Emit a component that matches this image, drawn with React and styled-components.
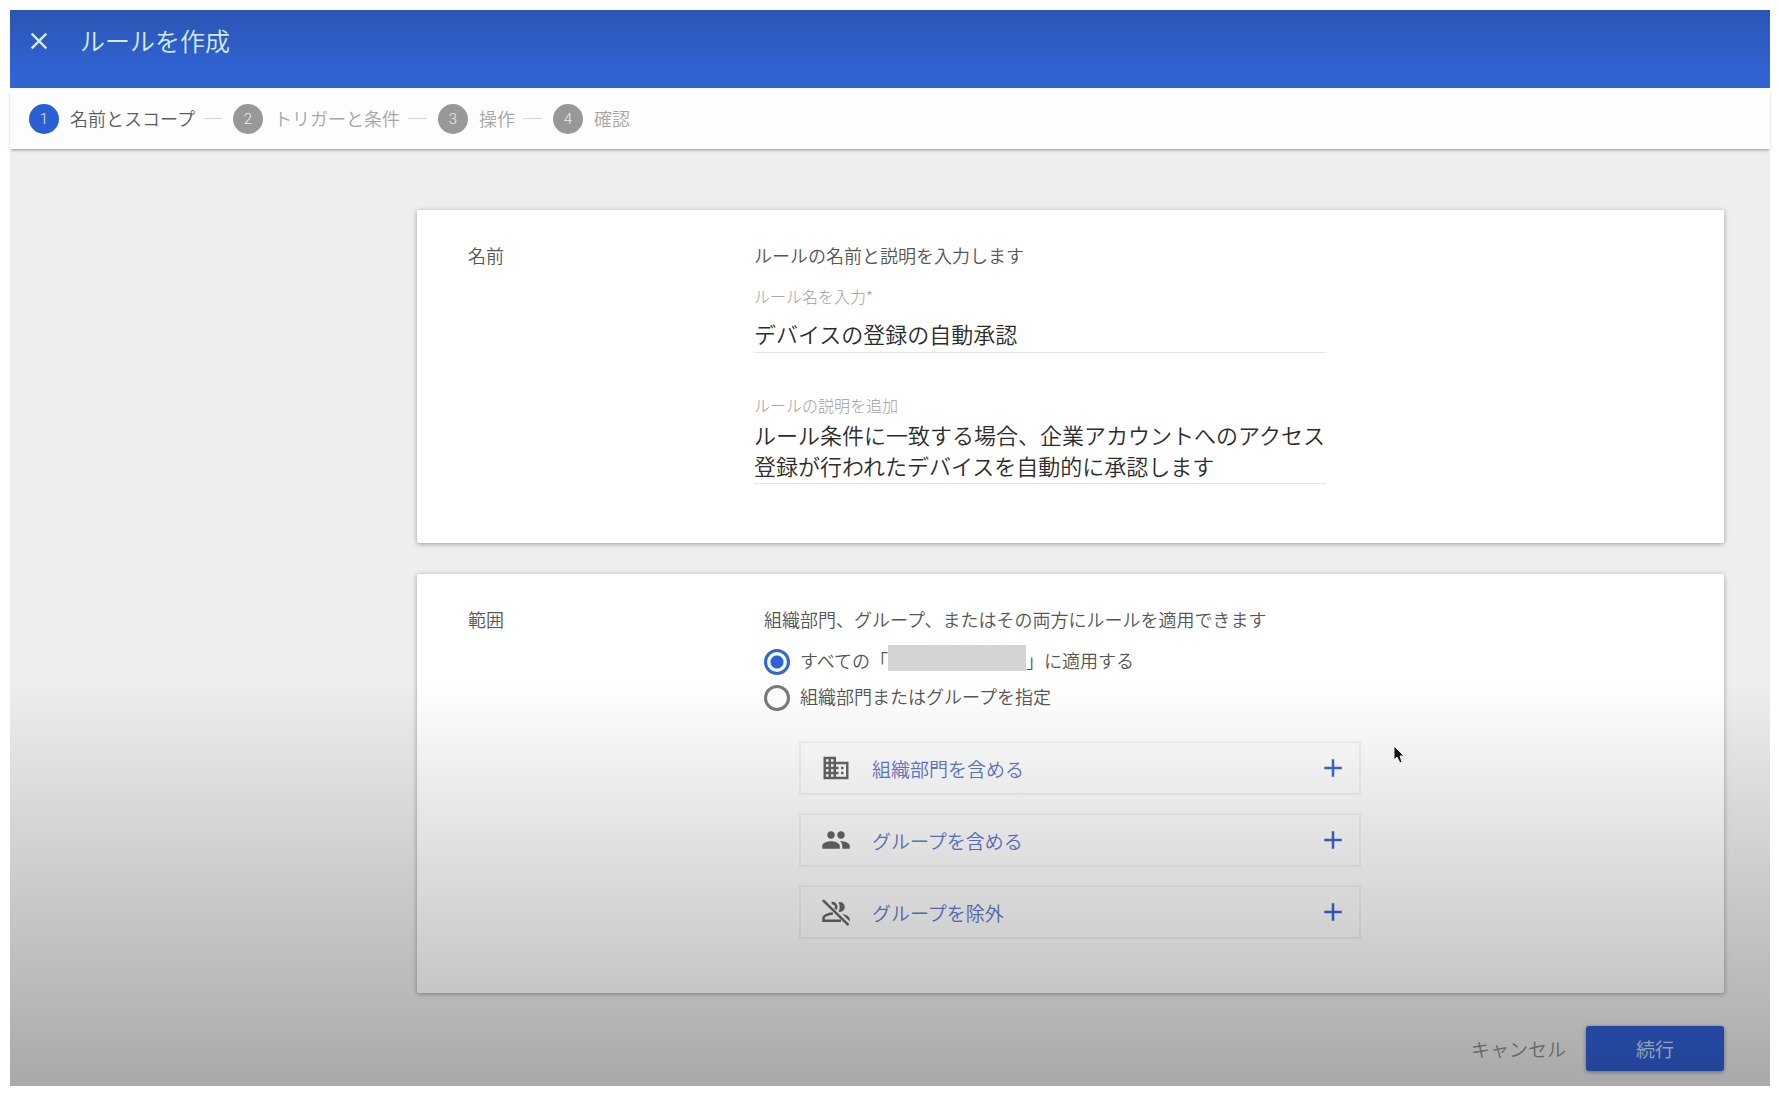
import React, { useState } from 'react';
import styled, { createGlobalStyle } from 'styled-components';
import { MdAdd, MdClose, MdDomain, MdPeople } from 'react-icons/md';

const GlobalStyle = createGlobalStyle`
  * {
    box-sizing: border-box;
  }

  body {
    margin: 0;
    background: #fff;
    color: #555;
    font-family: "Noto Sans CJK JP", sans-serif;
    font-size: 18px;
    line-height: 26px;
  }

  button, input, textarea {
    font-family: inherit;
  }
`;

const Page = styled.div`
  display: flex;
  min-height: 100vh;
  padding: 10px 10px 8px;
`;

const Frame = styled.div`
  position: relative;
  display: flex;
  flex: 1;
  flex-direction: column;
  background: #eee;
`;

// darkens the bottom of the dialog, never takes clicks
const Shade = styled.div`
  position: absolute;
  left: 0;
  right: 0;
  bottom: 0;
  height: 406px;
  background: linear-gradient(rgba(0, 0, 0, 0), rgba(0, 0, 0, 0.29));
  pointer-events: none;
`;

const Header = styled.header`
  display: flex;
  align-items: flex-start;
  gap: 27px;
  height: 78px;
  padding: 12px 15px;
  background: linear-gradient(#2b55b3, #3163d3 80%);
  color: #d3ecfb;
`;

const CloseButton = styled.button`
  display: flex;
  padding: 5px 0;
  border: 0;
  background: none;
  color: inherit;
  font-size: 28px;
  cursor: pointer;
`;

const Title = styled.h1`
  margin: 0;
  font-size: 25px;
  font-weight: 350;
  line-height: 36px;
`;

const Steps = styled.ol`
  z-index: 1;
  display: flex;
  align-items: center;
  height: 61px;
  margin: 0;
  padding: 0 19px;
  background: #fdfdfd;
  box-shadow: 0 2px 3px -1px rgba(0, 0, 0, 0.4);
  list-style: none;
`;

const Step = styled.li`
  display: flex;
  align-items: center;
  gap: 11px;
  color: ${({ $active }) => ($active ? '#5c5c5c' : '#a6a6a6')};
  font-weight: 350;

  &:not(:first-child)::before {
    content: '';
    width: 19px;
    height: 1px;
    margin-left: 8px;
    background: #d8d8d8;
  }
`;

const StepNumber = styled.span`
  display: flex;
  align-items: center;
  justify-content: center;
  width: 30px;
  height: 30px;
  border-radius: 50%;
  background: ${({ $active }) => ($active ? '#2a60d3' : '#989898')};
  color: #e9eef5;
  font-family: Roboto, sans-serif;
  font-size: 15px;
`;

const StepLabel = styled.span`
  padding-bottom: 2px;
`;

const Main = styled.main`
  display: flex;
  flex-direction: column;
  gap: 31px;
  padding: 61px 46px 0 407px;
`;

const Card = styled.section`
  display: grid;
  grid-template-columns: 286px 1fr;
  padding: 32px 52px ${({ $bottom }) => $bottom}px 51px;
  border-radius: 2px;
  background: #fff;
  box-shadow: 0 1px 5px rgba(0, 0, 0, 0.35);
`;

const CardTitle = styled.h2`
  margin: 0;
  font-size: 18px;
  font-weight: 350;
`;

const Intro = styled.p`
  margin: 0;
  font-weight: 350;
`;

const Field = styled.div`
  display: flex;
  flex-direction: column;
  width: 572px;
  max-width: 100%;
  margin-top: ${({ $top }) => $top}px;
`;

const FieldLabel = styled.label`
  color: #a0a0a0;
  font-size: 16px;
  font-weight: 300;
  line-height: 24px;
`;

const TextInput = styled.input`
  height: 45px;
  padding: 6px 0 0;
  border: 0;
  border-bottom: 1px solid #e4e4e4;
  outline: 0;
  background: none;
  color: #2c2c2c;
  font-size: 22px;
  font-weight: 350;
`;

const TextArea = styled.textarea`
  height: 67px;
  padding: 2px 0 0;
  border: 0;
  border-bottom: 1px solid #e4e4e4;
  outline: 0;
  background: none;
  color: #2c2c2c;
  font-size: 22px;
  font-weight: 350;
  line-height: 31px;
  overflow: hidden;
  resize: none;
`;

const ScopeBody = styled.div`
  padding-left: 10px;
`;

const RadioGroup = styled.div`
  display: flex;
  flex-direction: column;
  gap: 10px;
  margin-top: 17px;
`;

const RadioRow = styled.label`
  display: flex;
  align-items: flex-start;
  gap: 10px;
  line-height: 22px;
  font-weight: 350;
`;

const Radio = styled.input`
  flex: none;
  width: 26px;
  height: 26px;
  margin: 0;
  border: 3px solid #7a7a7a;
  border-radius: 50%;
  appearance: none;

  &:checked {
    border-color: #3567c8;
    background: radial-gradient(circle, #2f62d2 6px, #eff8ff 7px);
  }
`;

const Redacted = styled.span`
  display: inline-block;
  width: 138px;
  height: 26px;
  margin: -4px 0 0;
  background: #d4d4d4;
  vertical-align: top;
`;

const Targets = styled.div`
  display: flex;
  flex-direction: column;
  gap: 18px;
  width: 562px;
  max-width: 100%;
  margin: 30px 0 0 35px;
`;

const TargetButton = styled.button`
  display: flex;
  align-items: center;
  height: 54px;
  padding: 0 11px 0 20px;
  border: 2px solid rgba(0, 0, 0, 0.05);
  background: none;
  color: #6479cc;
  font-size: 19px;
  font-weight: 350;
  text-align: left;
  cursor: pointer;
`;

const TargetIcon = styled.span`
  display: flex;
  width: 51px;
  color: #666;
  font-size: 30px;
`;

const TargetLabel = styled.span`
  flex: 1;
`;

const PlusIcon = styled(MdAdd)`
  color: #3c66cb;
  font-size: 30px;
`;

const Footer = styled.footer`
  display: flex;
  justify-content: flex-end;
  gap: 20px;
  padding: 33px 46px 14px;
`;

const CancelButton = styled.button`
  padding: 0;
  border: 0;
  background: none;
  color: #8c8c8c;
  font-size: 19px;
  font-weight: 350;
  cursor: pointer;
`;

const SubmitButton = styled.button`
  width: 138px;
  height: 45px;
  padding: 0;
  border: 0;
  border-radius: 3px;
  background: #3060d6;
  box-shadow: 0 1px 4px rgba(0, 0, 0, 0.4);
  color: #c3dcf5;
  font-size: 19px;
  cursor: pointer;
`;

const Pointer = styled.svg`
  position: absolute;
  top: 734px;
  left: 1382px;
  pointer-events: none;
`;

const GroupOffIcon = () => (
  <svg width="1em" height="1em" viewBox="0 0 24 24" fill="none" stroke="currentColor" strokeWidth="2">
    <path d="M1.500 2.500 22 22.500" />
    <path d="M9.500 13.200C5.500 13.400 2 15 2 17v2h14" />
    <path d="M8.500 5A3 3 0 0 1 11.500 9.800" />
    <path d="M15 4a4 4 0 0 1 0 8l-1-.5c1.300-2 1.300-5 0-7z" fill="currentColor" stroke="none" />
    <path d="M17 13.500c3 .5 6 1.800 6 4.500v1.500z" fill="currentColor" stroke="none" />
  </svg>
);

const steps = ['名前とスコープ', 'トリガーと条件', '操作', '確認'];

const targets = [
  { label: '組織部門を含める', Icon: MdDomain },
  { label: 'グループを含める', Icon: MdPeople },
  { label: 'グループを除外', Icon: GroupOffIcon },
];

const App = () => {
  const [name, setName] = useState('デバイスの登録の自動承認');
  const [description, setDescription] = useState(
    'ルール条件に一致する場合、企業アカウントへのアクセス\n登録が行われたデバイスを自動的に承認します'
  );
  const [scope, setScope] = useState('all');

  return (
    <Page>
      <GlobalStyle />
      <Frame>
        <Header>
          <CloseButton type="button" aria-label="閉じる">
            <MdClose />
          </CloseButton>
          <Title>ルールを作成</Title>
        </Header>
        <Steps>
          {steps.map((step, index) => (
            <Step key={step} $active={index === 0}>
              <StepNumber $active={index === 0}>{index + 1}</StepNumber>
              <StepLabel>{step}</StepLabel>
            </Step>
          ))}
        </Steps>
        <Main>
          <Card $bottom={59}>
            <CardTitle>名前</CardTitle>
            <div>
              <Intro>ルールの名前と説明を入力します</Intro>
              <Field $top={16}>
                <FieldLabel htmlFor="rule-name">ルール名を入力*</FieldLabel>
                <TextInput
                  id="rule-name"
                  value={name}
                  onChange={(e) => setName(e.target.value)}
                />
              </Field>
              <Field $top={40}>
                <FieldLabel htmlFor="rule-description">ルールの説明を追加</FieldLabel>
                <TextArea
                  id="rule-description"
                  value={description}
                  onChange={(e) => setDescription(e.target.value)}
                />
              </Field>
            </div>
          </Card>
          <Card $bottom={54}>
            <CardTitle>範囲</CardTitle>
            <ScopeBody>
              <Intro>組織部門、グループ、またはその両方にルールを適用できます</Intro>
              <RadioGroup>
                <RadioRow>
                  <Radio
                    type="radio"
                    name="scope"
                    checked={scope === 'all'}
                    onChange={() => setScope('all')}
                  />
                  <span>すべての「<Redacted />」に適用する</span>
                </RadioRow>
                <RadioRow>
                  <Radio
                    type="radio"
                    name="scope"
                    checked={scope === 'custom'}
                    onChange={() => setScope('custom')}
                  />
                  <span>組織部門またはグループを指定</span>
                </RadioRow>
              </RadioGroup>
              <Targets>
                {targets.map(({ label, Icon }) => (
                  <TargetButton key={label} type="button">
                    <TargetIcon><Icon /></TargetIcon>
                    <TargetLabel>{label}</TargetLabel>
                    <PlusIcon />
                  </TargetButton>
                ))}
              </Targets>
            </ScopeBody>
          </Card>
        </Main>
        <Footer>
          <CancelButton type="button">キャンセル</CancelButton>
          <SubmitButton type="submit">続行</SubmitButton>
        </Footer>
        <Shade />
        <Pointer width="14" height="22" viewBox="0 0 14 22">
          <path d="M2 2v14l3-3 3 6 2-1-2-6h4z" fill="#111" stroke="#eee" />
        </Pointer>
      </Frame>
    </Page>
  );
};

export default App;
